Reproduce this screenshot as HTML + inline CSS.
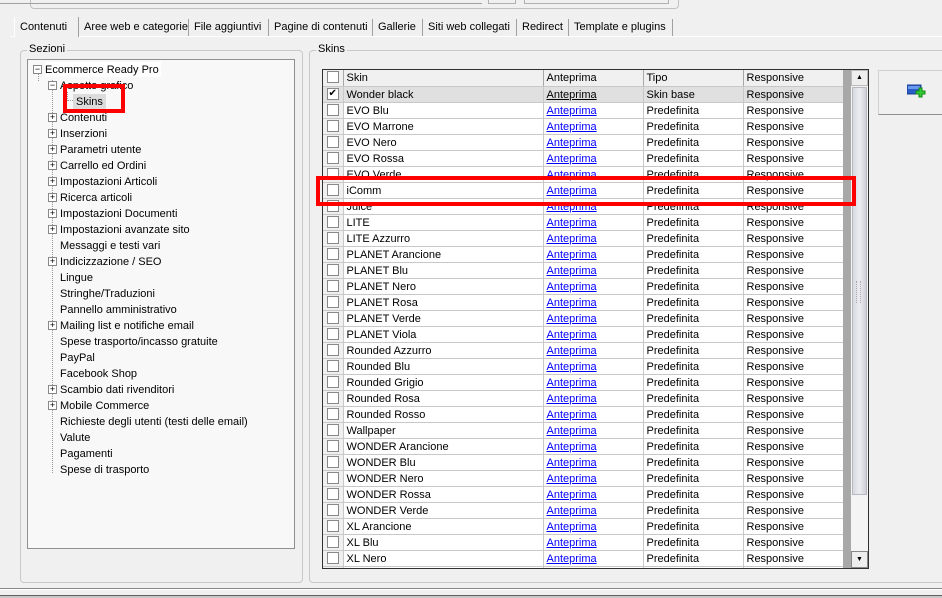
<!DOCTYPE html>
<html><head><meta charset="utf-8"><style>
*{box-sizing:border-box;margin:0;padding:0}
body{width:942px;height:598px;background:#f0f0f0;font-family:"Liberation Sans",sans-serif;font-size:11px;color:#000;position:relative;overflow:hidden}
.a{position:absolute}
.tab{position:absolute;top:19px;height:17px;line-height:17px;border-right:1px solid #a0a0a0;padding-left:5px;white-space:nowrap}
.grp{position:absolute;border:1px solid #c8c8c8;border-radius:4px}
.lg{position:absolute;top:-8px;left:6px;background:#f0f0f0;padding:0 2px}
.ti{position:absolute;height:15px;line-height:17px;white-space:nowrap}
.ex{position:absolute;width:9px;height:9px;border:1px solid #888;background:#fff;font-size:9px;line-height:7px;text-align:center;color:#000}
table{border-collapse:collapse;position:absolute;left:323px;top:70px;width:520px;table-layout:fixed;background:#fff}
tr{height:16px}
td{height:16px;border-right:1px solid #c8c8c8;border-bottom:1px solid #c8c8c8;padding:2px 0 0 3px;white-space:nowrap;overflow:hidden;line-height:13px;vertical-align:top}
tr.h td{background:#f0f0f0;border-right:1px solid #a8a8a8}
td.c{padding:0;background:#f0f0f0;text-align:center;line-height:15px;vertical-align:middle}
.cb{display:inline-block;width:12px;height:12px;border:1px solid #888;background:#fff;vertical-align:middle;font-size:10px;line-height:10px}
a{color:#00f;text-decoration:underline}
tr.s td{background:#e0e0e0}
tr.s a{color:#000}
</style></head><body>
<div class="a" style="left:30px;top:-4px;width:649px;height:13px;border:1px solid #c0c0c0;border-radius:4px"></div>
<div class="a" style="left:0;top:-4px;width:482px;height:8px;border-bottom:1px solid #a0a0a0"></div>
<div class="a" style="left:488px;top:-4px;width:28px;height:8px;border:1px solid #b0b0b0"></div>
<div class="a" style="left:524px;top:-4px;width:145px;height:8px;border:1px solid #b0b0b0"></div>
<div class="a" style="left:10px;top:36px;width:932px;height:1px;background:#fff"></div>
<div class="tab" style="left:14px;width:65px;background:#f0f0f0;border-left:1px solid #fff;top:17px;height:20px;padding-left:5px;line-height:20px">Contenuti</div>
<div class="tab" style="left:79px;width:110px">Aree web e categorie</div>
<div class="tab" style="left:189px;width:80px">File aggiuntivi</div>
<div class="tab" style="left:269px;width:104px">Pagine di contenuti</div>
<div class="tab" style="left:373px;width:50px">Gallerie</div>
<div class="tab" style="left:423px;width:94px">Siti web collegati</div>
<div class="tab" style="left:517px;width:52px">Redirect</div>
<div class="tab" style="left:569px;width:104px">Template e plugins</div>
<div class="grp" style="left:20px;top:50px;width:283px;height:533px"><span class="lg">Sezioni</span></div>
<div class="grp" style="left:309px;top:50px;width:640px;height:533px"><span class="lg">Skins</span></div>
<div class="a" style="left:27px;top:59px;width:268px;height:490px;background:#f8f8f8;border:1px solid #909090"></div>
<div class="a" style="left:52px;top:80px;width:0;height:393px;border-left:1px dotted #999"></div>
<div class="a" style="left:38px;top:73px;width:0;height:8px;border-left:1px dotted #999"></div>
<div class="ex" style="left:33px;top:65px">−</div><div class="ti" style="left:45px;top:62px;background:#fff;padding-right:2px">Ecommerce Ready Pro</div>
<div class="ex" style="left:48px;top:81px">−</div><div class="ti" style="left:60px;top:78px">Aspetto grafico</div>
<div class="a" style="left:67px;top:92px;height:9px;border-left:1px dotted #999;width:6px;border-bottom:1px dotted #999"></div>
<div class="ti" style="left:73px;top:94px;background:#dcdcdc;padding:0 3px;height:16px">Skins</div>
<div class="ex" style="left:48px;top:113px">+</div><div class="ti" style="left:60px;top:110px">Contenuti</div>
<div class="ex" style="left:48px;top:129px">+</div><div class="ti" style="left:60px;top:126px">Inserzioni</div>
<div class="ex" style="left:48px;top:145px">+</div><div class="ti" style="left:60px;top:142px">Parametri utente</div>
<div class="ex" style="left:48px;top:161px">+</div><div class="ti" style="left:60px;top:158px">Carrello ed Ordini</div>
<div class="ex" style="left:48px;top:177px">+</div><div class="ti" style="left:60px;top:174px">Impostazioni Articoli</div>
<div class="ex" style="left:48px;top:193px">+</div><div class="ti" style="left:60px;top:190px">Ricerca articoli</div>
<div class="ex" style="left:48px;top:209px">+</div><div class="ti" style="left:60px;top:206px">Impostazioni Documenti</div>
<div class="ex" style="left:48px;top:225px">+</div><div class="ti" style="left:60px;top:222px">Impostazioni avanzate sito</div>
<div class="ti" style="left:60px;top:238px">Messaggi e testi vari</div>
<div class="ex" style="left:48px;top:257px">+</div><div class="ti" style="left:60px;top:254px">Indicizzazione / SEO</div>
<div class="ti" style="left:60px;top:270px">Lingue</div>
<div class="ti" style="left:60px;top:286px">Stringhe/Traduzioni</div>
<div class="ti" style="left:60px;top:302px">Pannello amministrativo</div>
<div class="ex" style="left:48px;top:321px">+</div><div class="ti" style="left:60px;top:318px">Mailing list e notifiche email</div>
<div class="ti" style="left:60px;top:334px">Spese trasporto/incasso gratuite</div>
<div class="ti" style="left:60px;top:350px">PayPal</div>
<div class="ti" style="left:60px;top:366px">Facebook Shop</div>
<div class="ex" style="left:48px;top:385px">+</div><div class="ti" style="left:60px;top:382px">Scambio dati rivenditori</div>
<div class="ex" style="left:48px;top:401px">+</div><div class="ti" style="left:60px;top:398px">Mobile Commerce</div>
<div class="ti" style="left:60px;top:414px">Richieste degli utenti (testi delle email)</div>
<div class="ti" style="left:60px;top:430px">Valute</div>
<div class="ti" style="left:60px;top:446px">Pagamenti</div>
<div class="ti" style="left:60px;top:462px">Spese di trasporto</div>
<div class="a" style="left:322px;top:69px;width:547px;height:500px;background:#a8a8a8;border:1px solid #303030"></div>
<div class="a" style="left:323px;top:70px;width:520px;height:498px;overflow:hidden">
<table style="left:0;top:0">
<colgroup><col style="width:20px"><col style="width:200px"><col style="width:100px"><col style="width:100px"><col style="width:100px"></colgroup>
<tr class="h"><td class="c"><span class="cb"></span></td><td>Skin</td><td>Anteprima</td><td>Tipo</td><td>Responsive</td></tr>
<tr class="s"><td class="c"><span class="cb">✔</span></td><td>Wonder black</td><td><a>Anteprima</a></td><td>Skin base</td><td>Responsive</td></tr>
<tr><td class="c"><span class="cb"></span></td><td>EVO Blu</td><td><a>Anteprima</a></td><td>Predefinita</td><td>Responsive</td></tr>
<tr><td class="c"><span class="cb"></span></td><td>EVO Marrone</td><td><a>Anteprima</a></td><td>Predefinita</td><td>Responsive</td></tr>
<tr><td class="c"><span class="cb"></span></td><td>EVO Nero</td><td><a>Anteprima</a></td><td>Predefinita</td><td>Responsive</td></tr>
<tr><td class="c"><span class="cb"></span></td><td>EVO Rossa</td><td><a>Anteprima</a></td><td>Predefinita</td><td>Responsive</td></tr>
<tr><td class="c"><span class="cb"></span></td><td>EVO Verde</td><td><a>Anteprima</a></td><td>Predefinita</td><td>Responsive</td></tr>
<tr><td class="c"><span class="cb"></span></td><td>iComm</td><td><a>Anteprima</a></td><td>Predefinita</td><td>Responsive</td></tr>
<tr><td class="c"><span class="cb"></span></td><td>Juice</td><td><a>Anteprima</a></td><td>Predefinita</td><td>Responsive</td></tr>
<tr><td class="c"><span class="cb"></span></td><td>LITE</td><td><a>Anteprima</a></td><td>Predefinita</td><td>Responsive</td></tr>
<tr><td class="c"><span class="cb"></span></td><td>LITE Azzurro</td><td><a>Anteprima</a></td><td>Predefinita</td><td>Responsive</td></tr>
<tr><td class="c"><span class="cb"></span></td><td>PLANET Arancione</td><td><a>Anteprima</a></td><td>Predefinita</td><td>Responsive</td></tr>
<tr><td class="c"><span class="cb"></span></td><td>PLANET Blu</td><td><a>Anteprima</a></td><td>Predefinita</td><td>Responsive</td></tr>
<tr><td class="c"><span class="cb"></span></td><td>PLANET Nero</td><td><a>Anteprima</a></td><td>Predefinita</td><td>Responsive</td></tr>
<tr><td class="c"><span class="cb"></span></td><td>PLANET Rosa</td><td><a>Anteprima</a></td><td>Predefinita</td><td>Responsive</td></tr>
<tr><td class="c"><span class="cb"></span></td><td>PLANET Verde</td><td><a>Anteprima</a></td><td>Predefinita</td><td>Responsive</td></tr>
<tr><td class="c"><span class="cb"></span></td><td>PLANET Viola</td><td><a>Anteprima</a></td><td>Predefinita</td><td>Responsive</td></tr>
<tr><td class="c"><span class="cb"></span></td><td>Rounded Azzurro</td><td><a>Anteprima</a></td><td>Predefinita</td><td>Responsive</td></tr>
<tr><td class="c"><span class="cb"></span></td><td>Rounded Blu</td><td><a>Anteprima</a></td><td>Predefinita</td><td>Responsive</td></tr>
<tr><td class="c"><span class="cb"></span></td><td>Rounded Grigio</td><td><a>Anteprima</a></td><td>Predefinita</td><td>Responsive</td></tr>
<tr><td class="c"><span class="cb"></span></td><td>Rounded Rosa</td><td><a>Anteprima</a></td><td>Predefinita</td><td>Responsive</td></tr>
<tr><td class="c"><span class="cb"></span></td><td>Rounded Rosso</td><td><a>Anteprima</a></td><td>Predefinita</td><td>Responsive</td></tr>
<tr><td class="c"><span class="cb"></span></td><td>Wallpaper</td><td><a>Anteprima</a></td><td>Predefinita</td><td>Responsive</td></tr>
<tr><td class="c"><span class="cb"></span></td><td>WONDER Arancione</td><td><a>Anteprima</a></td><td>Predefinita</td><td>Responsive</td></tr>
<tr><td class="c"><span class="cb"></span></td><td>WONDER Blu</td><td><a>Anteprima</a></td><td>Predefinita</td><td>Responsive</td></tr>
<tr><td class="c"><span class="cb"></span></td><td>WONDER Nero</td><td><a>Anteprima</a></td><td>Predefinita</td><td>Responsive</td></tr>
<tr><td class="c"><span class="cb"></span></td><td>WONDER Rossa</td><td><a>Anteprima</a></td><td>Predefinita</td><td>Responsive</td></tr>
<tr><td class="c"><span class="cb"></span></td><td>WONDER Verde</td><td><a>Anteprima</a></td><td>Predefinita</td><td>Responsive</td></tr>
<tr><td class="c"><span class="cb"></span></td><td>XL Arancione</td><td><a>Anteprima</a></td><td>Predefinita</td><td>Responsive</td></tr>
<tr><td class="c"><span class="cb"></span></td><td>XL Blu</td><td><a>Anteprima</a></td><td>Predefinita</td><td>Responsive</td></tr>
<tr><td class="c"><span class="cb"></span></td><td>XL Nero</td><td><a>Anteprima</a></td><td>Predefinita</td><td>Responsive</td></tr>
<tr><td class="c"></td><td></td><td></td><td></td><td></td></tr>
</table>
</div>
<div class="a" style="left:851px;top:70px;width:17px;height:498px;background:#f4f4f4"></div>
<div class="a" style="left:851px;top:70px;width:17px;height:16px;background:#eee;border:1px solid #bbb;font-size:7px;text-align:center;line-height:14px">▲</div>
<div class="a" style="left:852px;top:87px;width:15px;height:408px;background:linear-gradient(90deg,#d8d8e0,#ececf2,#d0d0d8);border:1px solid #b8b8c0"></div>
<div class="a" style="left:856px;top:281px;width:5px;height:22px;border-left:1px dotted #aaa;border-right:1px dotted #aaa"></div>
<div class="a" style="left:851px;top:551px;width:17px;height:17px;background:#eee;border:1px solid #888;font-size:7px;text-align:center;line-height:15px">▼</div>
<div class="a" style="left:878px;top:70px;width:70px;height:45px;border:1px solid #d0d0d0;border-right:none;border-bottom:1px solid #909090"></div>
<svg class="a" style="left:907px;top:84px" width="20" height="16"><rect x="0" y="1" width="14" height="9" fill="#2a5cc8" stroke="#1a3c90"/><rect x="1" y="2" width="12" height="3" fill="#6a9af0"/><path d="M11 6h3v-3h3v3h3v3h-3v3h-3v-3h-3z" transform="translate(-2,1)" fill="#3c3" stroke="#181"/></svg>
<div class="a" style="left:63px;top:84px;width:62px;height:29px;border:4px solid #f00"></div>
<div class="a" style="left:316px;top:176px;width:540px;height:30px;border:4px solid #f00"></div>
<div class="a" style="left:0;top:588px;width:942px;height:2px;border-top:1px solid #888;border-bottom:1px solid #fff"></div>
<div class="a" style="left:0;top:595px;width:942px;height:3px;background:#c8c8c8;border-top:1px solid #606060"></div>
</body></html>
